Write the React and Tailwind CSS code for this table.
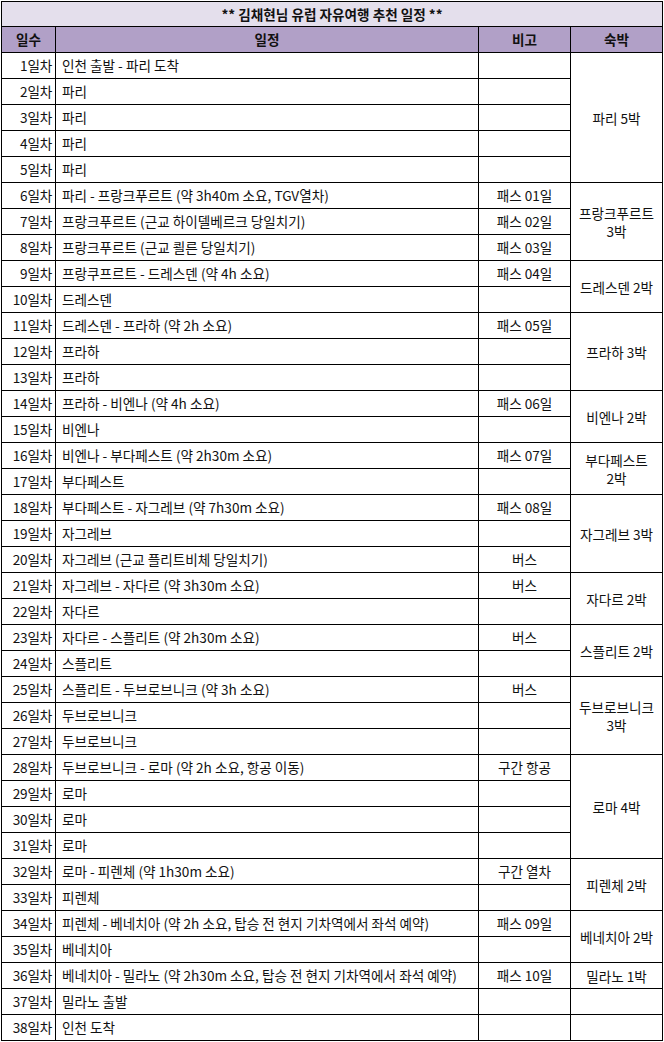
import React from "react";

const rows = [
  ["인천 출발 - 파리 도착", ""],
  ["파리", ""],
  ["파리", ""],
  ["파리", ""],
  ["파리", ""],
  ["파리 - 프랑크푸르트 (약 3h40m 소요, TGV열차)", "패스 01일"],
  ["프랑크푸르트 (근교 하이델베르크 당일치기)", "패스 02일"],
  ["프랑크푸르트 (근교 쾰른 당일치기)", "패스 03일"],
  ["프랑쿠프르트 - 드레스덴 (약 4h 소요)", "패스 04일"],
  ["드레스덴", ""],
  ["드레스덴 - 프라하 (약 2h 소요)", "패스 05일"],
  ["프라하", ""],
  ["프라하", ""],
  ["프라하 - 비엔나 (약 4h 소요)", "패스 06일"],
  ["비엔나", ""],
  ["비엔나 - 부다페스트 (약 2h30m 소요)", "패스 07일"],
  ["부다페스트", ""],
  ["부다페스트 - 자그레브 (약 7h30m 소요)", "패스 08일"],
  ["자그레브", ""],
  ["자그레브 (근교 플리트비체 당일치기)", "버스"],
  ["자그레브 - 자다르 (약 3h30m 소요)", "버스"],
  ["자다르", ""],
  ["자다르 - 스플리트 (약 2h30m 소요)", "버스"],
  ["스플리트", ""],
  ["스플리트 - 두브로브니크 (약 3h 소요)", "버스"],
  ["두브로브니크", ""],
  ["두브로브니크", ""],
  ["두브로브니크 - 로마 (약 2h 소요, 항공 이동)", "구간 항공"],
  ["로마", ""],
  ["로마", ""],
  ["로마", ""],
  ["로마 - 피렌체 (약 1h30m 소요)", "구간 열차"],
  ["피렌체", ""],
  ["피렌체 - 베네치아 (약 2h 소요, 탑승 전 현지 기차역에서 좌석 예약)", "패스 09일"],
  ["베네치아", ""],
  ["베네치아 - 밀라노 (약 2h30m 소요, 탑승 전 현지 기차역에서 좌석 예약)", "패스 10일"],
  ["밀라노 출발", ""],
  ["인천 도착", ""],
];

// 숙박: start row index -> [rowSpan, lines]
const stays = {
  0: [5, ["파리 5박"]],
  5: [3, ["프랑크푸르트", "3박"]],
  8: [2, ["드레스덴 2박"]],
  10: [3, ["프라하 3박"]],
  13: [2, ["비엔나 2박"]],
  15: [2, ["부다페스트", "2박"]],
  17: [3, ["자그레브 3박"]],
  20: [2, ["자다르 2박"]],
  22: [2, ["스플리트 2박"]],
  24: [3, ["두브로브니크", "3박"]],
  27: [4, ["로마 4박"]],
  31: [2, ["피렌체 2박"]],
  33: [2, ["베네치아 2박"]],
  35: [1, ["밀라노 1박"]],
  36: [1, [""]],
  37: [1, [""]],
};

const cell = "border border-black p-0";

export default function App() {
  return (
    <div
      className="bg-white w-[664px] h-[1042px] pl-[1px] pt-[1px] text-[13.6px] text-[#111]"
      style={{ fontFamily: '"Noto Sans CJK KR", "Noto Sans", sans-serif' }}
    >
      <table className="table-fixed border-collapse w-[662px]">
        <colgroup>
          <col className="w-[54px]" />
          <col className="w-[423px]" />
          <col className="w-[92px]" />
          <col className="w-[92px]" />
        </colgroup>
        <tbody>
          <tr className="h-[25px]">
            <td colSpan={4} className={cell + " bg-[#e4dfec] text-center font-bold"}>
              ** 김채현님 유럽 자유여행 추천 일정 **
            </td>
          </tr>
          <tr className="h-[26px] bg-[#b1a0c7] font-bold">
            <td className={cell + " text-center"}>일수</td>
            <td className={cell + " text-center"}>일정</td>
            <td className={cell + " text-center"}>비고</td>
            <td className={cell + " text-center"}>숙박</td>
          </tr>
          {rows.map((r, i) => (
            <tr key={i} className="h-[26px]">
              <td className={cell + " text-right pr-[3px] whitespace-nowrap tracking-[-0.2px]"}>{i + 1}일차</td>
              <td className={cell + " pl-[6px] whitespace-nowrap"}>{r[0]}</td>
              <td className={cell + " text-center"}>{r[1]}</td>
              {stays[i] && (
                <td rowSpan={stays[i][0]} className={cell + " text-center leading-[18px]"}>
                  {stays[i][1].map((l, j) => (
                    <div key={j}>{l}</div>
                  ))}
                </td>
              )}
            </tr>
          ))}
        </tbody>
      </table>
    </div>
  );
}
